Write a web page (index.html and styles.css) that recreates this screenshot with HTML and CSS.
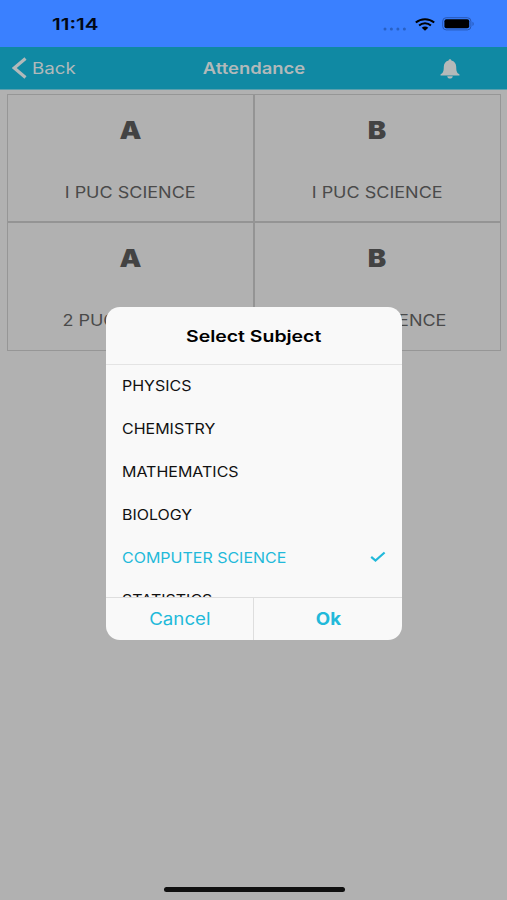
FILE: index.html
```html
<!DOCTYPE html>
<html lang="en">
<head>
<meta charset="utf-8">
<title>Attendance</title>
<link rel="stylesheet" href="styles.css">
</head>
<body>
<div class="screen">
  <header class="status">
    <span class="time wide">11:14</span>
    <div class="indicators">
      <svg class="dots" width="24" height="4" viewBox="0 0 24 4"><circle cx="2" cy="2" r="1.5"/><circle cx="8.4" cy="2" r="1.5"/><circle cx="14.9" cy="2" r="1.5"/><circle cx="21.4" cy="2" r="1.5"/></svg>
      <svg class="wifi" width="20" height="13" viewBox="0 0 20 13"><g fill="none" stroke="#000" stroke-width="2"><path d="M.8 4.500C6 .1 14 .1 19.200 4.500"/><path d="M4.100 7.600c3.300-3 8.500-3 11.800 0"/></g><path d="M6.700 9.800c1.800-1.600 4.800-1.600 6.600 0L10 12.800Z"/></svg>
      <svg class="battery" width="33" height="14" viewBox="0 0 33 14"><rect x=".7" y=".7" width="28.2" height="12.2" rx="3.5" fill="none" stroke="#2757b5" stroke-width="1"/><rect x="2.4" y="2.3" width="24.8" height="9" rx="2"/><path d="M30.5 4.7c1.6.7 1.6 3.6 0 4.3Z" fill="#2757b5"/></svg>
    </div>
  </header>
  <nav class="navbar">
    <div class="back">
      <svg width="15" height="22" viewBox="0 0 15 22"><path d="M13.500 1.500 2.200 11 13.500 20.500" fill="none" stroke="#b2b9ba" stroke-width="3.2"/></svg>
      <span class="wide">Back</span>
    </div>
    <h1 class="title"><span class="wide">Attendance</span></h1>
    <div class="alerts">
      <svg width="20" height="21" viewBox="0 0 20 21" fill="#b5b9b9"><path d="M10 .3c.8 0 1.3.5 1.400 1.300 3 .7 4.700 3 4.800 6.100.1 4.400.5 6 3.300 7.700v1.100H.5v-1.100c2.800-1.700 3.200-3.300 3.300-7.700.1-3.100 1.800-5.400 4.800-6.100C8.700.8 9.200.3 10 .3ZM7.200 17.200h5.600c-.2 1.500-1.300 2.400-2.800 2.400s-2.600-.9-2.800-2.400Z"/></svg>
    </div>
  </nav>
  <main class="classes">
    <div class="class"><b class="section wide">A</b><span class="course wide">I PUC SCIENCE</span></div>
    <div class="class"><b class="section wide">B</b><span class="course wide">I PUC SCIENCE</span></div>
    <div class="class"><b class="section wide">A</b><span class="course wide">2 PUC SCIENCE</span></div>
    <div class="class"><b class="section wide">B</b><span class="course wide">2 PUC SCIENCE</span></div>
  </main>
  <div class="home"></div>
  <div class="overlay">
    <section class="dialog">
      <h2 class="heading"><span class="wide">Select Subject</span></h2>
      <ul class="subjects">
        <li><span class="wide">PHYSICS</span></li>
        <li><span class="wide">CHEMISTRY</span></li>
        <li><span class="wide">MATHEMATICS</span></li>
        <li><span class="wide">BIOLOGY</span></li>
        <li class="selected"><span class="wide">COMPUTER SCIENCE</span><svg width="16" height="12" viewBox="0 0 16 12"><path d="m1.200 5.800 4.300 3.700 9.100-8" fill="none" stroke="#22b9da" stroke-width="2.2"/></svg></li>
        <li><span class="wide">STATISTICS</span></li>
      </ul>
      <div class="actions">
        <div class="action"><span class="wide">Cancel</span></div>
        <div class="action ok"><span class="wide">Ok</span></div>
      </div>
    </section>
  </div>
</div>
</body>
</html>
```
FILE: styles.css
```css
* { box-sizing: border-box; }
body { margin: 0; font-family: Inter, "Liberation Sans", sans-serif; }
.screen { position: relative; width: 507px; height: 900px; overflow: hidden; background: #b1b1b1; display: flex; flex-direction: column; }
.wide { display: inline-block; transform: scaleX(1.15); white-space: nowrap; }
svg { display: block; flex: none; }
.status { height: 47px; flex: none; background: #3a80ff; display: flex; justify-content: space-between; padding: 0 32px 0 52px; }
.time { font-size: 16px; font-weight: 600; line-height: 20px; margin-top: 14px; height: 20px; transform: scaleX(1.29); transform-origin: left; color: #020814; }
.indicators { display: flex; padding-top: 17px; }
.dots { margin: 10px 7px 0 0; fill: #2860c4; }
.wifi { margin: 1px 7px 0 1px; }
.navbar { height: 43px; flex: none; background: #1089a3; border-bottom: 1px solid #5aa0ae; display: grid; grid-template-columns: 1fr 110px 1fr; align-items: center; color: #b2b9ba; }
.back { display: flex; align-items: center; gap: 5px; padding-left: 12px; font-size: 16px; }
.back .wide { transform: scaleX(1.17); transform-origin: left; }
.title { margin: 0; font-size: 16px; font-weight: 600; text-align: center; }
.title .wide { transform: translateX(.5px) scaleX(1.15); }
.alerts { padding: 3px 0 0 131px; }
.classes { width: 494px; height: 257px; margin: 4px 0 0 7px; display: grid; grid-template: 126px 1fr / 1fr 1fr; gap: 2px; border: 1px solid #969696; background: #949494; }
.class { background: #b1b1b1; display: flex; flex-direction: column; align-items: center; color: #4a4a4a; padding-top: 21px; }
.section { font-size: 24px; font-weight: 900; line-height: 30px; color: #434343; }
.course { font-size: 16px; line-height: 20px; margin-top: 35.5px; transform: scaleX(1.125); }
.home { width: 181px; height: 5px; border-radius: 3px; background: #101010; margin: auto auto 8px 164px; }
.overlay { position: absolute; inset: 0; display: flex; align-items: center; justify-content: center; padding: 46px 0 0 1px; }
.dialog { width: 296px; height: 333px; border-radius: 14px; background: #f9f9f9; overflow: hidden; display: flex; flex-direction: column; }
.heading { margin: 0; height: 58px; flex: none; border-bottom: 1px solid #e4e4e4; font-size: 16px; font-weight: 600; line-height: 58px; text-align: center; }
.heading .wide { transform: scaleX(1.215); }
.subjects { list-style: none; margin: 0; padding: 0 16px; height: 232px; flex: none; overflow: hidden; font-size: 14px; color: #111; }
.subjects li { height: 42.8px; display: flex; align-items: center; justify-content: space-between; }
.subjects .wide { transform: scaleX(1.142); transform-origin: left; }
.subjects .selected, .action { color: #22b9da; }
.actions { flex: 1; display: grid; grid-template-columns: 147px 1fr; border-top: 1px solid #dedede; }
.action { font-size: 17px; line-height: 43px; text-align: center; }
.action .wide { transform: scaleX(1.1); }
.ok { border-left: 1px solid #dedede; font-weight: 700; }
```
